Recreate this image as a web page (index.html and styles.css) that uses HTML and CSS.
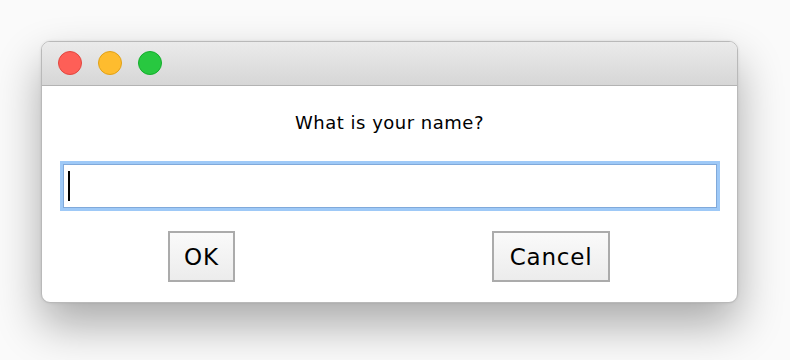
FILE: index.html
```html
<!DOCTYPE html>
<html lang="en">
  <head>
    <meta charset="UTF-8" />
    <title>Dialog</title>
    <link rel="stylesheet" href="styles.css">
  </head>
  <body>
    <div class="window">
      <div class="titlebar">
        <span class="light red"></span>
        <span class="light yellow"></span>
        <span class="light green"></span>
      </div>
      <div class="content">
        <p class="prompt">What is your name?</p>
        <div class="field"><span class="caret"></span></div>
        <div class="buttons">
          <button type="button" class="btn ok">OK</button>
          <button type="button" class="btn cancel">Cancel</button>
        </div>
      </div>
    </div>
  </body>
</html>
```

FILE: styles.css
```css
* {
  box-sizing: border-box;
  font-family: "DejaVu Sans", "Liberation Sans", sans-serif;
}
html,
body {
  margin: 0;
  height: 100%;
}
body {
  background: #fafafa;
  padding: 41px 0 0 41px;
}
.window {
  width: 697px;
  height: 262px;
  background: #ffffff;
  border: 1px solid #b9b9b9;
  border-radius: 9px;
  overflow: hidden;
  box-shadow: 0 22px 45px rgba(0, 0, 0, 0.32), 0 0 3px rgba(0, 0, 0, 0.1);
}
.titlebar {
  height: 44px;
  display: flex;
  align-items: center;
  gap: 16px;
  padding: 0 0 2px 16px;
  background: linear-gradient(to bottom, #ebebeb, #d6d6d6);
  border-bottom: 1px solid #b3b3b3;
}
.light {
  width: 24px;
  height: 24px;
  border-radius: 50%;
}
.red {
  background: #fe5f57;
  border: 1px solid #e2463f;
}
.yellow {
  background: #febc2e;
  border: 1px solid #e1a116;
}
.green {
  background: #28c840;
  border: 1px solid #14ae2c;
}
.content {
  display: flex;
  flex-direction: column;
}
.prompt {
  margin: 26px 0 0;
  text-align: center;
  font-size: 18px;
  letter-spacing: 0.5px;
  line-height: 22px;
  color: #000;
}
.field {
  margin: 27px 0 0 18px;
  width: 660px;
  height: 50px;
  border: 3px solid #9ec9f7;
  background: #fff;
  box-shadow: inset 0 0 0 1px #80a9da;
  padding: 7px 0 0 5px;
}
.caret {
  display: block;
  width: 2px;
  height: 30px;
  background: #000;
}
.buttons {
  display: flex;
  gap: 257px;
  margin: 20px 0 0 126px;
}
.btn {
  height: 51px;
  border: 2px solid #ababab;
  border-radius: 0;
  background: linear-gradient(to bottom, #fafafa, #ececec);
  font-size: 23px;
  letter-spacing: 0.8px;
  color: #000;
  padding: 0;
}
.ok {
  width: 67px;
}
.cancel {
  width: 118px;
}
```
